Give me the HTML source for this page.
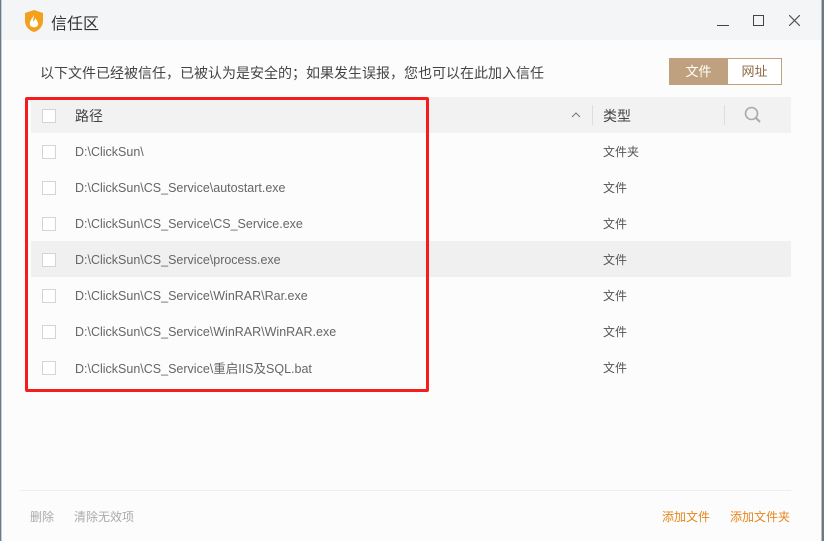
<!DOCTYPE html>
<html><head><meta charset="utf-8"><style>
body{margin:0;width:824px;height:541px;overflow:hidden;background:#6a7a88;font-family:"Liberation Sans","Noto Sans CJK SC",sans-serif;position:relative}
.win{position:absolute;left:1px;top:0;width:819px;height:541px;background:#fcfcfc;border-left:1px solid #ccc;border-right:1px solid #bbb}
.title{position:absolute;left:0;top:0;width:819px;height:40px;background:#f4f5f6}
.t{position:absolute;left:49px;top:10px;font-size:16px;color:#333}
.txt{position:absolute;font-size:13px;color:#444;white-space:nowrap}
.tab{position:absolute;top:58px;height:25px;font-size:13px;line-height:25px;text-align:center}
.hdr{position:absolute;left:29px;top:97px;width:760px;height:36px;background:#f2f2f2}
.row{position:absolute;left:29px;width:760px;height:36px}
.cb{position:absolute;left:11px;top:12px;width:12px;height:12px;border:1px solid #d4d4d4;background:#fff}
.p{position:absolute;left:44px;top:12px;font-size:12.5px;color:#666;white-space:nowrap}
.ty{position:absolute;left:572px;top:10px;font-size:12px;color:#555}
.red{position:absolute;left:25px;top:97px;width:398px;height:289px;border:3px solid #f41c1c;border-radius:2px}
</style></head><body>
<div class="win">
<div class="title">
<svg style="position:absolute;left:22px;top:9px" width="20" height="24" viewBox="0 0 20 24"><path d="M10 1 L19 4 V12 C19 18 14 22 10 23 C6 22 1 18 1 12 V4 Z" fill="#f3a01c"/><path d="M10 6 C8 10 5 12 6 16 C7 19 13 19 14 16 C15 13 12 12 12 9 C10 11 10 13 9 12 C9 10 10 8 10 6Z" fill="#fff"/></svg>
<div class="t">信任区</div>
<div style="position:absolute;left:715px;top:25px;width:12px;border-top:1px solid #444"></div>
<div style="position:absolute;left:751px;top:15px;width:9px;height:9px;border:1px solid #444"></div>
<svg style="position:absolute;left:787px;top:15px" width="11" height="11"><path d="M0 0L11 11M11 0L0 11" stroke="#555" stroke-width="1.2"/></svg>
</div>
<div class="txt" style="left:38px;top:63px;font-size:14px">以下文件已经被信任，已被认为是安全的；如果发生误报，您也可以在此加入信任</div>
<div class="tab" style="left:667px;width:57px;background:#bfa17f;color:#fff;border:1px solid #bfa17f">文件</div>
<div class="tab" style="left:725px;width:53px;background:#fff;color:#8a6a45;border:1px solid #bfa17f">网址</div>
<div class="hdr"><div class="cb" style="top:12px"></div><div class="p" style="font-size:14px;top:9px;color:#444">路径</div>
<svg style="position:absolute;left:540px;top:14px" width="10" height="7"><path d="M1 6L5 2L9 6" stroke="#777" fill="none"/></svg>
<div style="position:absolute;left:561px;top:8px;height:20px;border-left:1px solid #ddd"></div>
<div class="ty" style="font-size:14px;top:9px;color:#444">类型</div>
<div style="position:absolute;left:693px;top:8px;height:20px;border-left:1px solid #ddd"></div>
<svg style="position:absolute;left:713px;top:9px" width="18" height="18"><circle cx="7.5" cy="7.5" r="6" stroke="#aaa" stroke-width="1.6" fill="none"/><path d="M12 12L16 16" stroke="#aaa" stroke-width="2"/></svg>
</div>
<div class="row" style="top:133px"><div class="cb"></div><div class="p">D:\ClickSun\</div><div class="ty">文件夹</div></div>
<div class="row" style="top:169px"><div class="cb"></div><div class="p">D:\ClickSun\CS_Service\autostart.exe</div><div class="ty">文件</div></div>
<div class="row" style="top:205px"><div class="cb"></div><div class="p">D:\ClickSun\CS_Service\CS_Service.exe</div><div class="ty">文件</div></div>
<div class="row" style="top:241px;background:#f0f0f0"><div class="cb"></div><div class="p">D:\ClickSun\CS_Service\process.exe</div><div class="ty">文件</div></div>
<div class="row" style="top:277px"><div class="cb"></div><div class="p">D:\ClickSun\CS_Service\WinRAR\Rar.exe</div><div class="ty">文件</div></div>
<div class="row" style="top:313px"><div class="cb"></div><div class="p">D:\ClickSun\CS_Service\WinRAR\WinRAR.exe</div><div class="ty">文件</div></div>
<div class="row" style="top:349px"><div class="cb"></div><div class="p" style="top:9px">D:\ClickSun\CS_Service\重启IIS及SQL.bat</div><div class="ty">文件</div></div>
<div style="position:absolute;left:18px;top:490px;width:771px;border-top:1px solid #eee"></div>
<div class="txt" style="left:28px;top:508px;font-size:12px;color:#aaa">删除</div>
<div class="txt" style="left:72px;top:508px;font-size:12px;color:#aaa">清除无效项</div>
<div class="txt" style="left:660px;top:508px;font-size:12px;color:#e8861a">添加文件</div>
<div class="txt" style="left:728px;top:508px;font-size:12px;color:#e8861a">添加文件夹</div>
</div>
<div class="red"></div>
</body></html>
